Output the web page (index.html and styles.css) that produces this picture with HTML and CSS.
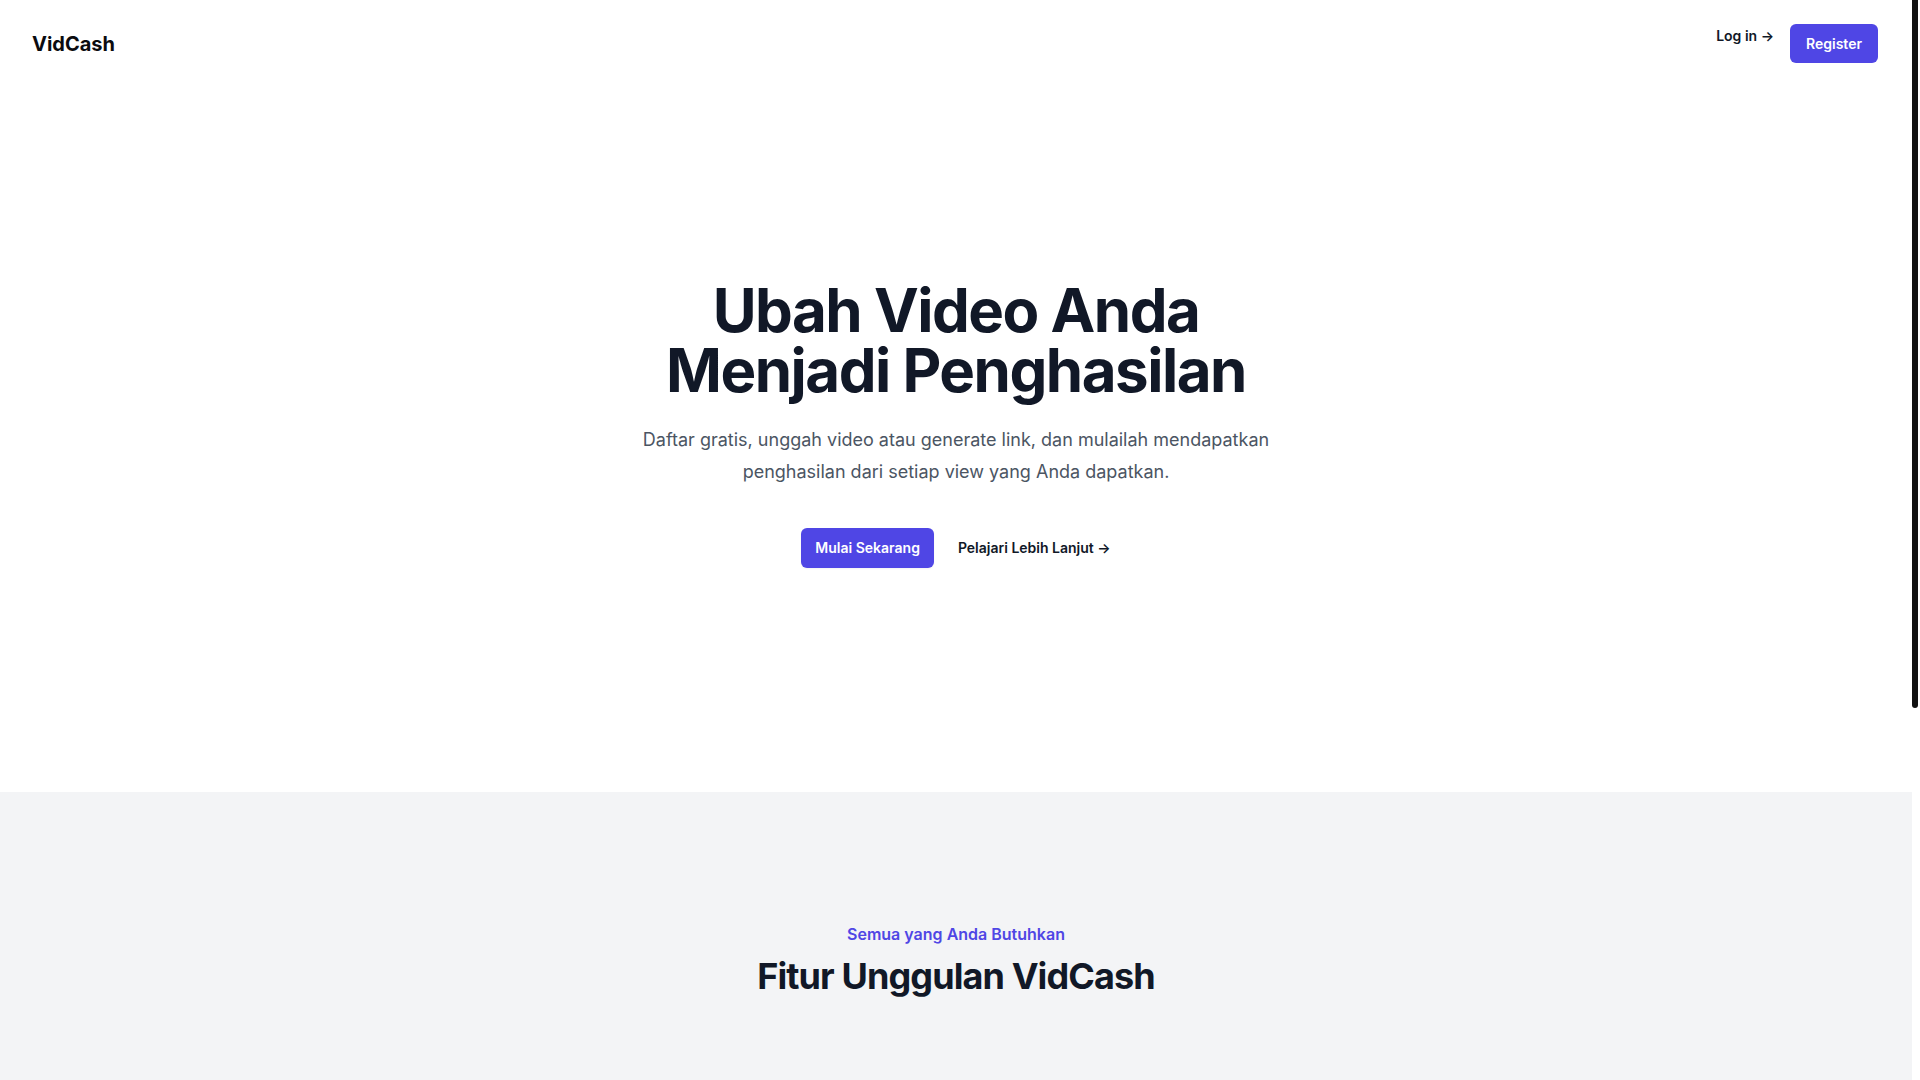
FILE: index.html
```html
<!DOCTYPE html>
<html lang="id">
<head>
<meta charset="utf-8">
<title>VidCash</title>
<link rel="stylesheet" href="styles.css">
</head>
<body>
<header class="site-header">
  <nav class="nav">
    <a class="logo" href="#">VidCash</a>
    <div class="nav-actions">
      <a class="login" href="#">Log in <span aria-hidden="true">&rarr;</span></a>
      <a class="btn-register" href="#">Register</a>
    </div>
  </nav>
</header>
<main>
  <section class="hero">
    <div class="hero-inner">
      <h1 class="hero-title">Ubah Video Anda Menjadi Penghasilan</h1>
      <p class="hero-text">Daftar gratis, unggah video atau generate link, dan mulailah mendapatkan penghasilan dari setiap view yang Anda dapatkan.</p>
      <div class="hero-actions">
        <a class="btn-primary" href="#">Mulai Sekarang</a>
        <a class="link-secondary" href="#">Pelajari Lebih Lanjut <span aria-hidden="true">&rarr;</span></a>
      </div>
    </div>
  </section>
  <section class="features">
    <div class="features-head">
      <p class="eyebrow">Semua yang Anda Butuhkan</p>
      <h2 class="features-title">Fitur Unggulan VidCash</h2>
    </div>
  </section>
</main>
<div class="scrollbar" aria-hidden="true"><div class="scrollbar-thumb"></div></div>
</body>
</html>
```

FILE: styles.css
```css
html {
  background: #ffffff;
  overflow: hidden;
}
body {
  margin: 0 8px 0 0;
  font-family: Inter, "Noto Sans", "Liberation Sans", sans-serif;
  color: #111827;
  background: #ffffff;
}
a {
  text-decoration: none;
  color: inherit;
}
.nav {
  display: flex;
  align-items: center;
  justify-content: space-between;
  padding: 24px 34px 24px 32px;
}
.logo {
  font-size: 20px;
  line-height: 28px;
  font-weight: 700;
  color: #0b0b0f;
}
.nav-actions {
  display: flex;
  align-items: flex-start;
  gap: 16px;
}
.login {
  font-size: 14px;
  line-height: 24px;
  font-weight: 600;
  color: #111827;
}
.btn-register {
  display: block;
  background: #4f46e5;
  color: #ffffff;
  font-size: 14px;
  line-height: 19px;
  font-weight: 600;
  padding: 10px 16px;
  border-radius: 6px;
}
.hero {
  padding: 193px 32px 224px;
}
.hero-inner {
  max-width: 672px;
  margin: 0 auto;
  text-align: center;
}
.hero-title {
  margin: 0;
  font-size: 60px;
  line-height: 60px;
  font-weight: 700;
  letter-spacing: -0.025em;
  color: #111827;
}
.hero-text {
  margin: 24px 0 0;
  font-size: 18px;
  line-height: 32px;
  color: #4b5563;
}
.hero-actions {
  margin-top: 40px;
  display: flex;
  align-items: center;
  justify-content: center;
  gap: 24px;
}
.btn-primary {
  display: block;
  background: #4f46e5;
  color: #ffffff;
  font-size: 14px;
  line-height: 20px;
  font-weight: 600;
  padding: 10px 14px;
  border-radius: 6px;
  box-shadow: 0 1px 2px rgba(0, 0, 0, 0.05);
}
.link-secondary {
  font-size: 14px;
  line-height: 24px;
  font-weight: 600;
  color: #111827;
}
.features {
  box-sizing: border-box;
  min-height: 855px;
  background: #f3f4f6;
  padding: 128px 32px;
}
.features-head {
  max-width: 672px;
  margin: 0 auto;
  text-align: center;
}
.eyebrow {
  margin: 0;
  font-size: 16px;
  line-height: 28px;
  font-weight: 600;
  color: #4f46e5;
}
.features-title {
  margin: 8px 0 0;
  font-size: 36px;
  line-height: 40px;
  font-weight: 700;
  letter-spacing: -0.025em;
  color: #111827;
}
.scrollbar {
  position: fixed;
  top: 0;
  right: 0;
  width: 8px;
  height: 100vh;
  background: #ffffff;
}
.scrollbar-thumb {
  width: 6px;
  height: 708px;
  background: #111111;
  border-radius: 0 0 3px 3px;
}
```
